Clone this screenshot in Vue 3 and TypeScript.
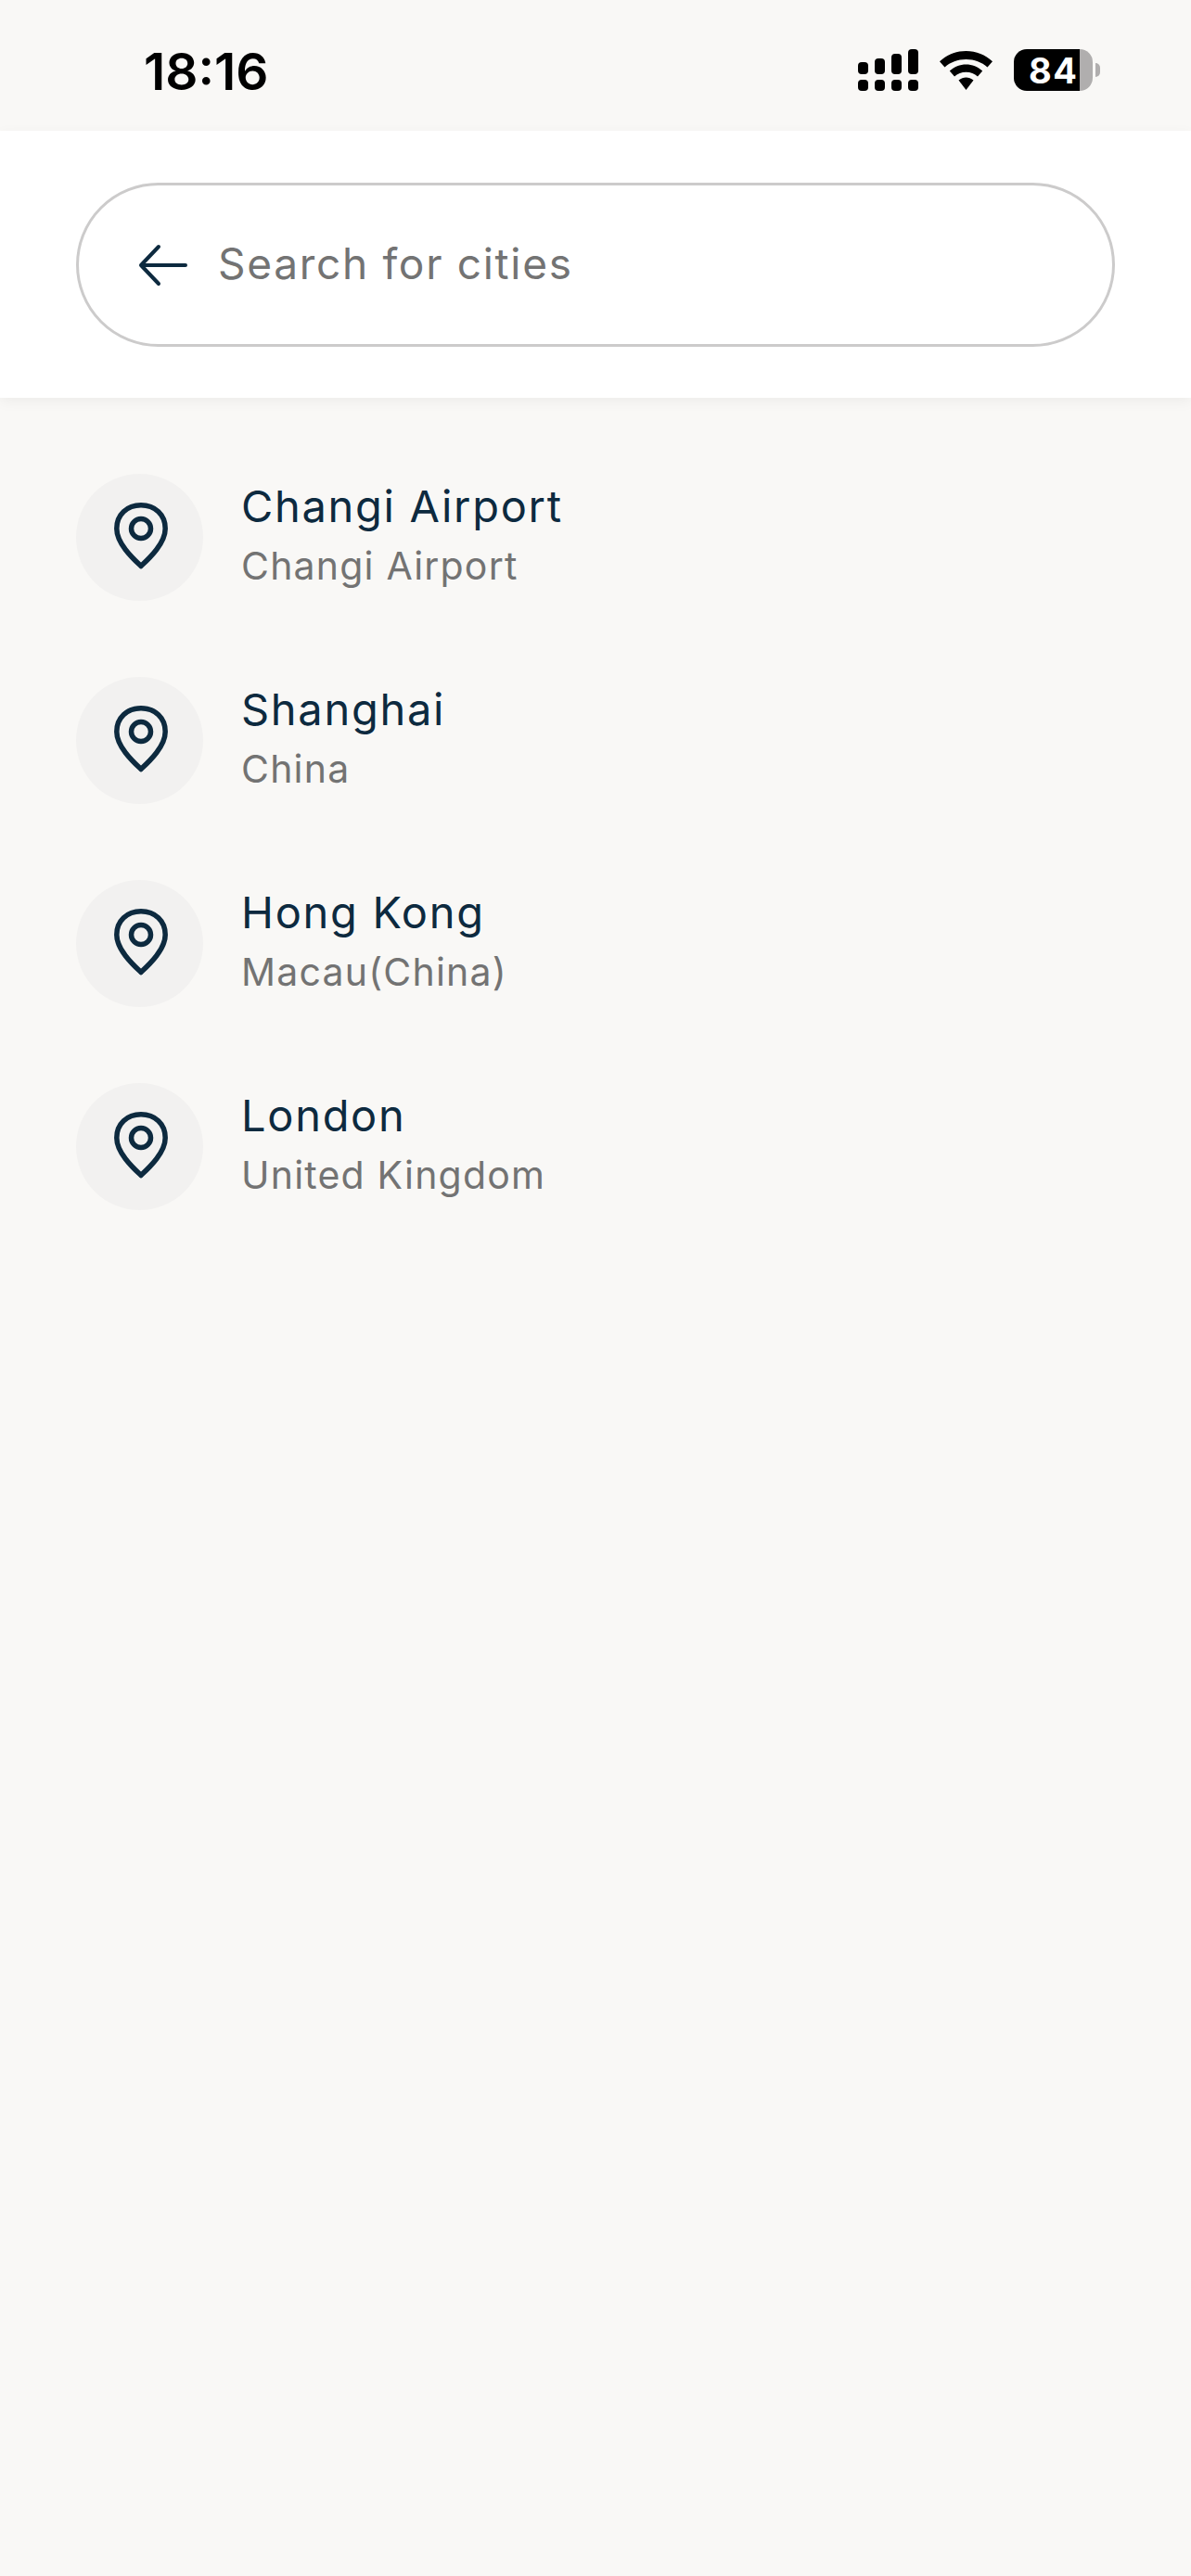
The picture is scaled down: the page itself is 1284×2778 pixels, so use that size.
<script setup lang="ts">
interface City { name: string; region: string }
const cities: City[] = [
  { name: 'Changi Airport', region: 'Changi Airport' },
  { name: 'Shanghai', region: 'China' },
  { name: 'Hong Kong', region: 'Macau(China)' },
  { name: 'London', region: 'United Kingdom' },
]
</script>

<template>
  <div class="page">
    <div class="status">
      <span class="time">18:16</span>
      <div class="status-icons">
        <svg class="signal" width="65" height="45" viewBox="0 0 65 45" fill="#000">
          <rect x="0" y="14" width="11" height="13" rx="4" />
          <rect x="18" y="10" width="11" height="17" rx="4" />
          <rect x="36" y="5" width="11" height="22" rx="4" />
          <rect x="54" y="0" width="11" height="27" rx="4" />
          <rect x="0" y="33" width="11" height="12" rx="4" />
          <rect x="18" y="33" width="11" height="12" rx="4" />
          <rect x="36" y="33" width="11" height="12" rx="4" />
          <rect x="54" y="33" width="11" height="12" rx="4" />
        </svg>
        <svg class="wifi" width="57" height="42" viewBox="0 0 57 42" fill="#000">
          <path d="M28.500 0C17.500 0 7.700 4.200 0 11.200L5.500 17.500C11.600 12 19.500 9 28.500 9C37.500 9 45.400 12 51.500 17.500L57 11.200C49.300 4.200 39.500 0 28.500 0Z" />
          <path d="M28.500 14.500C22 14.500 15.800 17 10.800 21.500L16 27.500C19.300 24.500 23.700 22.800 28.500 22.800C33.300 22.800 37.700 24.500 41 27.500L46.200 21.500C41.200 17 35 14.500 28.500 14.500Z" />
          <path d="M28.500 28.500C25.800 28.500 23.100 29.500 20.500 31.500L28.500 42L36.500 31.500C33.900 29.500 31.200 28.500 28.500 28.500Z" />
        </svg>
        <div class="battery">
          <div class="battery-body"><span>84</span></div>
          <div class="battery-nub"></div>
        </div>
      </div>
    </div>

    <header class="header">
      <div class="search">
        <svg class="back" width="54" height="46" viewBox="0 0 54 46" fill="none" stroke="#0d2a3f" stroke-width="4" stroke-linecap="round" stroke-linejoin="round">
          <path d="M51 23H4M22 3L3 23L22 43" />
        </svg>
        <span class="placeholder">Search for cities</span>
      </div>
    </header>

    <ul class="list">
      <li v-for="city in cities" :key="city.name" class="row">
        <div class="circle">
          <svg class="pin" width="58" height="72" viewBox="0 0 58 72" fill="none" stroke="#0d2a3f" stroke-width="5.500" stroke-linejoin="round">
            <path d="M29 68.500C20 60 2.800 44 2.800 28C2.800 13 14 2.800 29 2.800C44 2.800 55.200 13 55.200 28C55.200 44 38 60 29 68.500Z" />
            <circle cx="29" cy="28" r="10.500" />
          </svg>
        </div>
        <div class="text">
          <div class="name">{{ city.name }}</div>
          <div class="region">{{ city.region }}</div>
        </div>
      </li>
    </ul>
  </div>
</template>

<style>
html, body { margin: 0; background: #f9f8f6; }
</style>

<style scoped>
.page {
  width: 1284px;
  height: 2778px;
  background: #f9f8f6;
  font-family: Inter, "Liberation Sans", sans-serif;
  overflow: hidden;
}
.status {
  height: 141px;
  box-sizing: border-box;
  padding: 10px 98px 0 155px;
  display: flex;
  align-items: center;
  justify-content: space-between;
}
.time {
  font-size: 55px;
  font-weight: 600;
  color: #000;
  line-height: 1;
  margin-top: 3px;
}
.status-icons { display: flex; align-items: center; }
.signal { margin-right: 23px; }
.wifi { margin-right: 23px; }
.battery { display: flex; align-items: center; }
.battery-body {
  width: 85px;
  height: 45px;
  border-radius: 14px;
  background: linear-gradient(to right, #000 84%, #b0aeae 84%);
  display: flex;
  align-items: center;
  padding-left: 16px;
  box-sizing: border-box;
}
.battery-body span {
  color: #fff;
  font-size: 38px;
  font-weight: 700;
  letter-spacing: 1.5px;
  line-height: 1;
}
.battery-nub {
  width: 5px;
  height: 15px;
  margin-left: 3px;
  background: #b0aeae;
  border-radius: 0 8px 8px 0;
}
.header {
  height: 288px;
  box-sizing: border-box;
  background: #fff;
  padding: 56px 82px 0 82px;
  box-shadow: 0 4px 14px rgba(0, 0, 0, 0.05);
  position: relative;
}
.search {
  height: 177px;
  box-sizing: border-box;
  border: 3px solid #cccbcb;
  border-radius: 89px;
  display: flex;
  align-items: center;
  padding-left: 64px;
}
.back { margin-right: 32px; }
.placeholder {
  font-size: 46px;
  letter-spacing: 1.7px;
  color: #737373;
  margin-top: -4px;
}
.list {
  list-style: none;
  margin: 0;
  padding: 82px 0 0 82px;
  display: flex;
  flex-direction: column;
  gap: 82px;
}
.row { display: flex; align-items: center; gap: 41px; }
.circle {
  width: 137px;
  height: 137px;
  border-radius: 50%;
  background: #f2f1f0;
  display: flex;
  align-items: center;
  justify-content: center;
}
.pin { margin: 0 0 3px 3px; }
.text { display: flex; flex-direction: column; }
.name {
  font-size: 47px;
  line-height: 61px;
  letter-spacing: 1.7px;
  color: #0d2a3f;
}
.region {
  font-size: 41px;
  line-height: 69px;
  letter-spacing: 1.2px;
  color: #737373;
}
</style>
